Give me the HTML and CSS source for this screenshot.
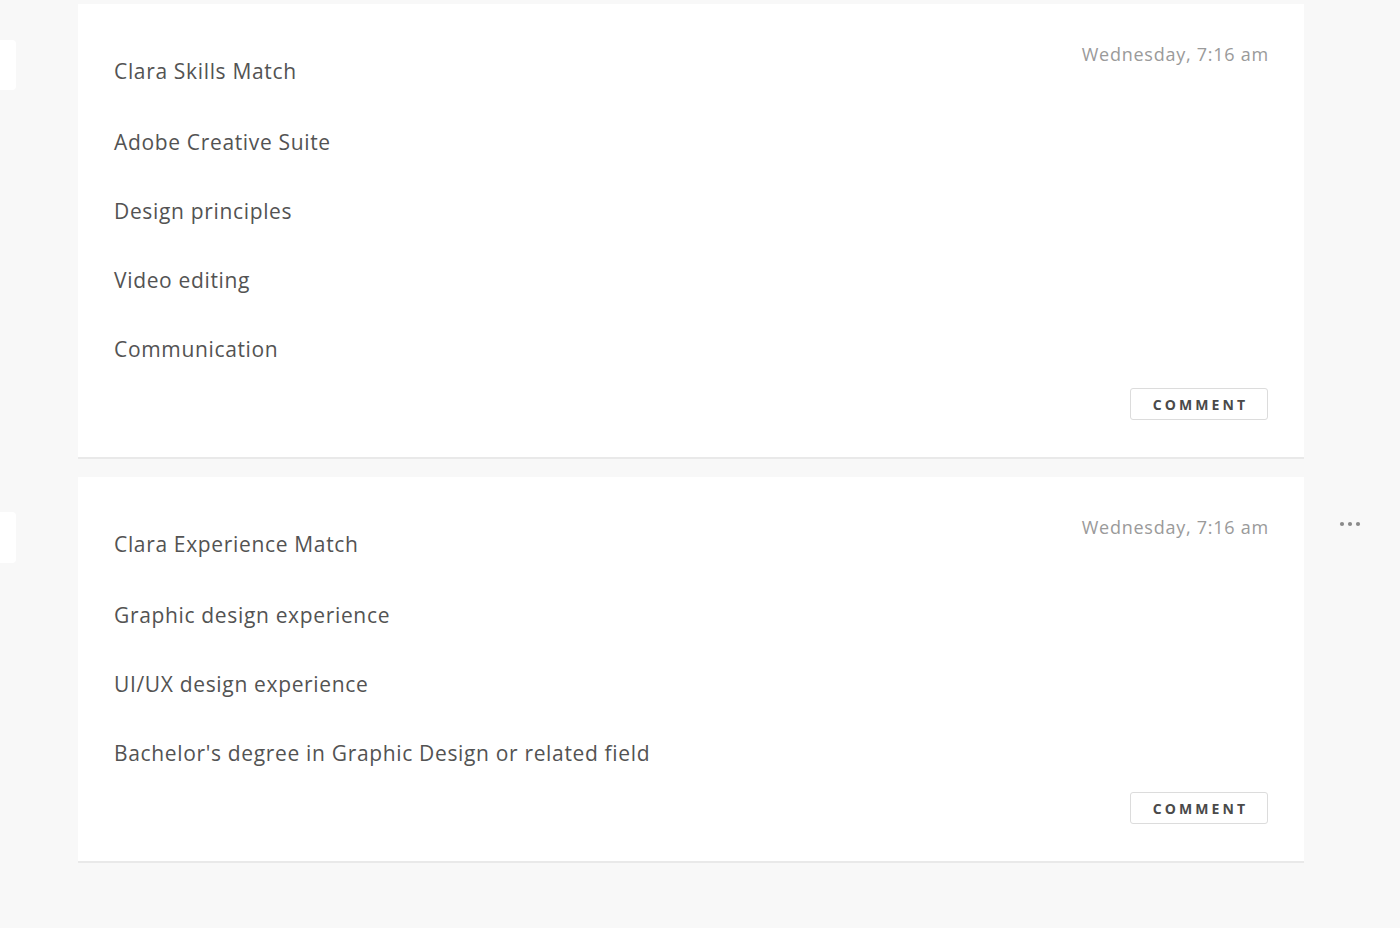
FILE: index.html
```html
<!DOCTYPE html>
<html>
<head>
<meta charset="utf-8">
<link rel="stylesheet" href="styles.css">
</head>
<body>
<div class="feed">
  <div class="row">
    <div class="stub"></div>
    <article class="card">
      <div class="card-body">
        <ul class="items">
          <li class="title">Clara Skills Match</li>
          <li>Adobe Creative Suite</li>
          <li>Design principles</li>
          <li>Video editing</li>
          <li>Communication</li>
        </ul>
        <time class="stamp">Wednesday, 7:16 am</time>
      </div>
      <div class="card-foot"><button class="btn">COMMENT</button></div>
    </article>
    <div class="menu"></div>
  </div>
  <div class="row row-2">
    <div class="stub"></div>
    <article class="card">
      <div class="card-body">
        <ul class="items">
          <li class="title">Clara Experience Match</li>
          <li>Graphic design experience</li>
          <li>UI/UX design experience</li>
          <li>Bachelor's degree in Graphic Design or related field</li>
        </ul>
        <time class="stamp">Wednesday, 7:16 am</time>
      </div>
      <div class="card-foot"><button class="btn">COMMENT</button></div>
    </article>
    <div class="menu">
      <svg class="dots" width="22" height="6" viewBox="0 0 22 6" aria-label="more">
        <circle cx="3" cy="3" r="2.1" fill="#8a8a8a"/>
        <circle cx="11" cy="3" r="2.1" fill="#8a8a8a"/>
        <circle cx="19" cy="3" r="2.1" fill="#8a8a8a"/>
      </svg>
    </div>
  </div>
</div>
</body>
</html>
```
FILE: styles.css
```css
html, body {
  margin: 0;
  padding: 0;
  background: #f8f8f8;
  font-family: "Open Sans", "Noto Sans", sans-serif;
}
.feed {
  padding-top: 4px;
  display: flex;
  flex-direction: column;
  gap: 18px;
}
.row {
  display: grid;
  grid-template-columns: 16px 1288px 96px;
  align-items: start;
}
.stub {
  margin-top: 36px;
  height: 50px;
  background: #fff;
  border-radius: 0 4px 4px 0;
}
.row-2 .stub { margin-top: 35px; height: 51px; }
.card {
  margin-left: 62px;
  width: 1226px;
  box-sizing: border-box;
  background: #fff;
  border-bottom: 2px solid #e9e9e9;
  padding: 33px 36px 37px 36px;
}
.card-body {
  display: flex;
  justify-content: space-between;
  align-items: flex-start;
}
.items {
  list-style: none;
  margin: 0;
  padding: 0;
  font-size: 21px;
  letter-spacing: 0.66px;
  color: #535353;
}
.items li {
  line-height: 69px;
  height: 69px;
}
.items li.title { margin-bottom: 2px; }
.stamp {
  margin-top: 7px;
  margin-right: -1px;
  font-size: 18px;
  letter-spacing: 0.75px;
  line-height: 20px;
  color: #9a9a9a;
}
.card-foot {
  display: flex;
  justify-content: flex-end;
  margin-top: 4px;
}
.btn {
  width: 138px;
  height: 32px;
  background: #fff;
  border: 1px solid #dcdcdc;
  border-radius: 3px;
  font-family: "Open Sans", "Noto Sans", sans-serif;
  font-weight: 700;
  font-size: 14px;
  letter-spacing: 3.1px;
  color: #4a4a4a;
  padding: 0 0 0 3px;
}
.menu {
  display: flex;
  padding-left: 35px;
}
.dots {
  display: block;
  margin-top: 44px;
}
```
